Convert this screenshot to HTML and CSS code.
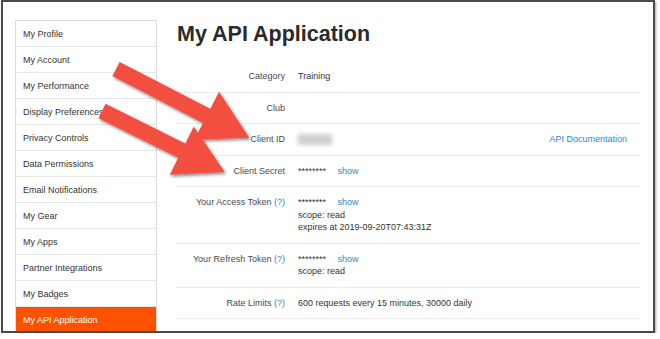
FILE: index.html
```html
<!DOCTYPE html>
<html lang="en">

<head>
    <meta charset="UTF-8">
    <meta name="viewport" content="width=device-width, initial-scale=1.0">
    <title>My API Application</title>
    <link rel="stylesheet" href="styles.css">
</head>

<body>

    <div class="frame">

        <ul class="nav">
            <li>My Profile</li>
            <li>My Account</li>
            <li>My Performance</li>
            <li>Display Preferences</li>
            <li>Privacy Controls</li>
            <li>Data Permissions</li>
            <li>Email Notifications</li>
            <li>My Gear</li>
            <li>My Apps</li>
            <li>Partner Integrations</li>
            <li>My Badges</li>
            <li class="active">My API Application</li>
        </ul>

        <div class="main">
            <h1>My API Application</h1>

            <div class="table">
                <div class="row">
                    <div class="label">Category</div>
                    <div class="value">Training</div>
                </div>
                <div class="row">
                    <div class="label">Club</div>
                    <div class="value"></div>
                </div>
                <div class="row">
                    <div class="label">Client ID</div>
                    <div class="value"><span class="blur"></span></div>
                    <div class="extra"><a>API Documentation</a></div>
                </div>
                <div class="row">
                    <div class="label">Client Secret</div>
                    <div class="value">******** <a class="show">show</a></div>
                </div>
                <div class="row">
                    <div class="label">Your Access Token <a>(?)</a></div>
                    <div class="value">
                        ******** <a class="show">show</a><br>
                        scope: read<br>
                        expires at 2019-09-20T07:43:31Z
                    </div>
                </div>
                <div class="row">
                    <div class="label">Your Refresh Token <a>(?)</a></div>
                    <div class="value">
                        ******** <a class="show">show</a><br>
                        scope: read
                    </div>
                </div>
                <div class="row">
                    <div class="label">Rate Limits <a>(?)</a></div>
                    <div class="value">600 requests every 15 minutes, 30000 daily</div>
                </div>
            </div>
        </div>

    </div>

    <!-- the two red arrows drawn over the screenshot -->
    <svg class="arrows" width="660" height="339" viewBox="0 0 660 339">
        <defs>
            <filter id="shadow" x="-20%" y="-20%" width="140%" height="140%">
                <feDropShadow dx="1.5" dy="2" stdDeviation="1.5" flood-color="#000" flood-opacity="0.45" />
            </filter>
        </defs>
        <g fill="#f2503f" filter="url(#shadow)">
            <polygon transform="translate(116 69) rotate(27.3)"
                points="0,-8 102,-8 102,-27 150,0 102,27 102,8 0,8" />
            <polygon transform="translate(102 111) rotate(26.4)"
                points="0,-8 89,-8 89,-27 137,0 89,27 89,8 0,8" />
        </g>
    </svg>

</body>

</html>
```

FILE: styles.css
```css
body {
    margin: 0;
    background-color: #fff;
    font-family: "Liberation Sans", Arial, sans-serif;
    color: #333;
}

a {
    color: #2f87c6;
    text-decoration: none;
}

.frame {
    box-sizing: border-box;
    width: 654px;
    height: 333px;
    margin-left: 1px;
    border: 2px solid #4b4b4b;
    box-shadow: 1px 2px 2px rgba(0, 0, 0, 0.35);
    overflow: hidden;
    display: flex;
    align-items: flex-start;
    padding: 18px 0 0 12px;
}

.nav {
    box-sizing: border-box;
    width: 142px;
    flex-shrink: 0;
    margin: 0;
    padding: 0;
    list-style: none;
    border: 1px solid #dcdcdc;
    font-size: 9px;
}

.nav li {
    height: 25px;
    line-height: 26px;
    padding-left: 7px;
    border-bottom: 1px solid #e6e6e6;
    color: #333;
}

.nav li.active {
    background-color: #fc5200;
    color: #fff;
}

.main {
    width: 464px;
    margin-left: 19px;
}

h1 {
    margin: 0 0 13px 1px;
    font-size: 21.5px;
    line-height: 28px;
    color: #2a2a2a;
}

.table {
    font-size: 9px;
    line-height: 12.5px;
}

.row {
    display: grid;
    grid-template-columns: 122px 1fr auto;
    padding: 9px 0;
    border-bottom: 1px solid #ececec;
}

.label {
    text-align: right;
    padding-right: 13px;
    color: #4a4a4a;
}

.value {
    color: #333;
}

.show {
    margin-left: 9px;
}

.extra {
    padding-right: 13px;
}

.blur {
    display: inline-block;
    width: 34px;
    height: 11px;
    vertical-align: middle;
    background-color: #cfcfcf;
    filter: blur(2px);
}

.arrows {
    position: absolute;
    top: 0;
    left: 0;
    pointer-events: none;
}
```
